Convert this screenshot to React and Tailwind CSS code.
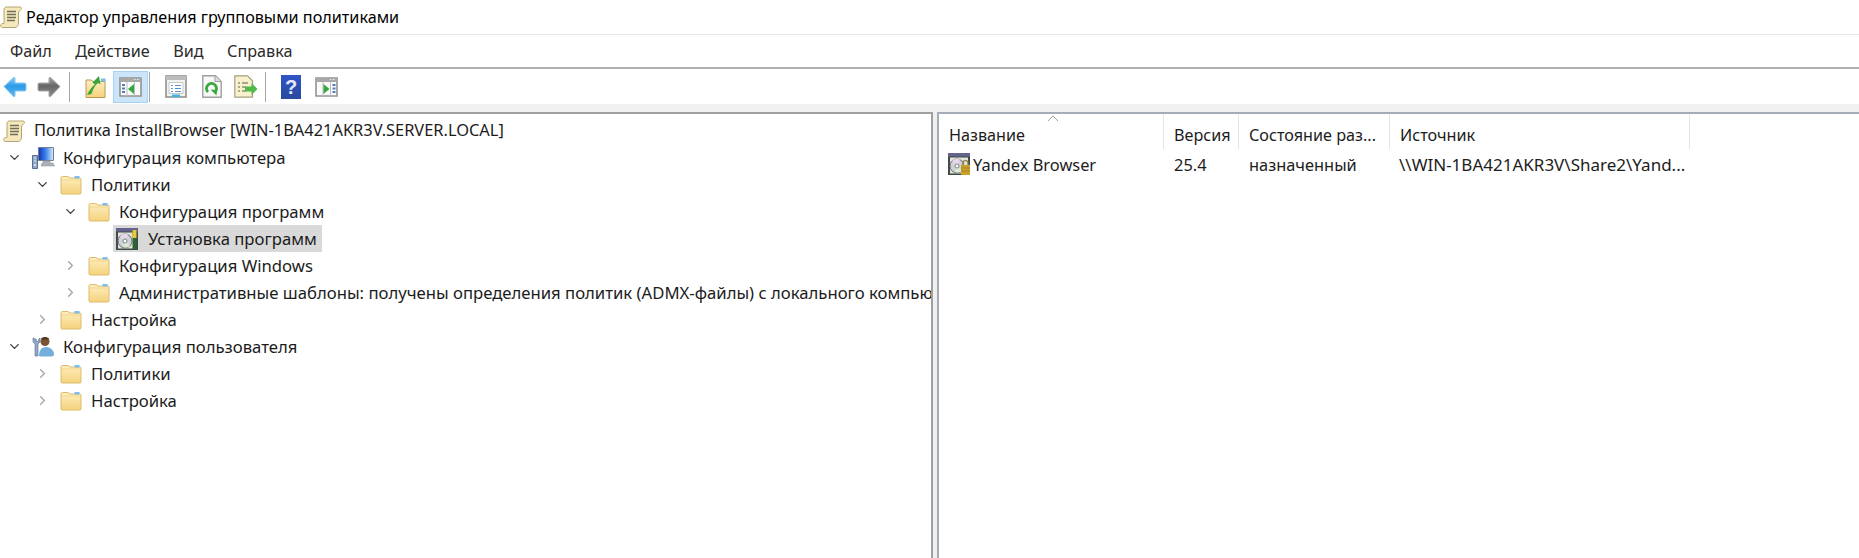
import { ChevronDown, ChevronRight } from "lucide-react";

const font = "[font-family:'Noto_Sans',sans-serif]";

function Defs() {
  return (
    <svg className="absolute w-0 h-0">
      <defs>
        <linearGradient id="folderFill" x1="0" y1="0" x2="0" y2="1">
          <stop offset="0" stopColor="#fdeec0" />
          <stop offset="1" stopColor="#f5d27c" />
        </linearGradient>
        <linearGradient id="backFill" x1="0" y1="0" x2="0" y2="1">
          <stop offset="0" stopColor="#8fd0f8" />
          <stop offset="0.45" stopColor="#2a9be8" />
          <stop offset="1" stopColor="#62b8f0" />
        </linearGradient>
        <linearGradient id="fwdFill" x1="0" y1="0" x2="0" y2="1">
          <stop offset="0" stopColor="#a8a8a8" />
          <stop offset="0.45" stopColor="#666666" />
          <stop offset="1" stopColor="#8f8f8f" />
        </linearGradient>
        <linearGradient id="helpFill" x1="0" y1="0" x2="0" y2="1">
          <stop offset="0" stopColor="#2f55c8" />
          <stop offset="1" stopColor="#2a4a9c" />
        </linearGradient>
        <linearGradient id="screenFill" x1="0" y1="0" x2="1" y2="0">
          <stop offset="0" stopColor="#1230b8" />
          <stop offset="0.5" stopColor="#3f86ee" />
          <stop offset="1" stopColor="#e0ecfb" />
        </linearGradient>
      </defs>
    </svg>
  );
}

function Scroll() {
  return (
    <svg viewBox="0 0 22 22" className="w-[22px] h-[22px] shrink-0">
      <path d="M6 1h14c1.500 0 2 1.500 1 2.500L18.500 6v11c0 2.500-1.500 4.500-3.500 4.500H2.500c-2.500 0-2.500-3.500 0-4H4V4c0-2 1-3 2-3z" fill="#f5e8bb" stroke="#b5a473" />
      <path d="M7 5.500h9M7 8.500h9M7 11.500h9M7 14.500h8" stroke="#6f6f5c" strokeWidth="1.300" />
    </svg>
  );
}

function Folder() {
  return (
    <svg viewBox="0 0 22 20" className="w-[22px] h-5 shrink-0">
      <path d="M1 3C1 2 1.500 1.500 2.500 1.500H8L10 3h10c.6 0 1 .4 1 1v14c0 .6-.4 1-1 1H2c-.6 0-1-.4-1-1z" fill="url(#folderFill)" stroke="#dcbc6c" />
      <path d="M2 5h18" stroke="#f3d68c" />
      <path d="M14.500 1h5v2.500h-5z" fill="#7cbdea" />
    </svg>
  );
}

function Computer() {
  return (
    <svg viewBox="0 0 24 24" className="w-6 h-6 shrink-0">
      <path d="M7.500 1.500h15v13h-15z" fill="url(#screenFill)" stroke="#74808e" />
      <path d="M12 15h7v2h3l1.500 3H10l1-3h1z" fill="#aab1bb" stroke="#8b929c" strokeWidth="0.500" />
      <path d="M1.500 9.500h5v13h-5z" fill="#8fa8c8" stroke="#5a7190" />
      <path d="M3 12h2M3 15h2" stroke="#eef4fa" strokeWidth="1.200" />
      <circle cx="4" cy="19" r="1" fill="#eef4fa" />
    </svg>
  );
}

function UserIcon() {
  return (
    <svg viewBox="0 0 24 24" className="w-6 h-6 shrink-0">
      <path d="M8 21c0-5 2-9 7-9s8 4 8 7.500c0 1.500-1.500 2-3.500 2H10c-1.500 0-2-.5-2-.5z" fill="#74aedc" />
      <circle cx="14" cy="6.500" r="4.500" fill="#7a5236" />
      <path d="M10 4c1-2.500 7-2.500 8 0-2 1-6 1-8 0z" fill="#54361f" />
      <path d="M2 3v4l2 2v12h3V9l2-2V3L7.500 4.500v2h-2v-2z" fill="#8fa8c8" stroke="#5a7190" strokeWidth="0.600" />
    </svg>
  );
}

function Disc({ lock }) {
  return (
    <svg viewBox="0 0 24 24" className="w-6 h-6 shrink-0">
      <path d="M1 1h22v22H1z" fill="#3d4a48" />
      <path d="M1 1h22v3.500H1z" fill="#64648f" />
      <path d="M3 5.500h18v16H3z" fill="#e4e4da" />
      <circle cx="10" cy="14" r="7" fill="#cfd3d8" stroke="#6f6f6f" />
      <path d="M10 14L5 9a7 7 0 0 1 8-1.500z" fill="#e8d6ee" />
      <path d="M10 14l5 5a7 7 0 0 1-7 1z" fill="#d8ecd6" />
      <circle cx="10" cy="14" r="2" fill="#fff" stroke="#808080" />
      {lock ? (
        <>
          <path d="M14 13h9v10h-9z" fill="#c9a02a" />
          <path d="M16 13v-2.500c0-2.500 5-2.500 5 0V13" fill="none" stroke="#8a7a40" strokeWidth="1.300" />
          <path d="M14 16h9M14 19h9" stroke="#a88520" />
        </>
      ) : (
        <>
          <path d="M17.500 3h4v19h-4z" fill="#2c6432" />
          <path d="M17.500 3h4v8h-4z" fill="#e8c83c" />
        </>
      )}
    </svg>
  );
}

function Window({ arrow }) {
  return (
    <svg viewBox="0 0 23 20" className="w-[23px] h-5 shrink-0">
      <path d="M1 1h21v18H1z" fill="#fbfbfb" stroke="#929292" strokeWidth="1.600" />
      <path d="M1 1h21v4H1z" fill="#a8a8a8" />
      <path d="M15 2.500h1.500M18 2.500h1.500" stroke="#eee" strokeWidth="1.200" />
      <path d="M8 5v14M15.500 5v14" stroke="#bdbdbd" />
      <path d={arrow === "left" ? "M3 8h3M3 11.500h3M3 15h3" : "M17.500 8h3M17.500 11.500h3M17.500 15h3"} stroke="#4f7fc0" strokeWidth="1.800" />
      {arrow === "left" ? (
        <path d="M15 7v10l-6-5z" fill="#33a840" />
      ) : (
        <path d="M8.500 7v10l6-5z" fill="#33a840" />
      )}
    </svg>
  );
}

function Toolbar() {
  return (
    <div className="flex items-center h-[35px] shrink-0">
      <svg viewBox="0 0 24 22" className="w-6 h-[22px] ml-[3px]">
        <path d="M1 10.500L10.500 1.500c.7-.6 1.500 0 1.500.8V7h9.500c.8 0 1.500.6 1.500 1.500v5c0 .8-.7 1.500-1.500 1.500H12v4.700c0 .8-.8 1.400-1.500.8z" fill="url(#backFill)" stroke="#86c6f0" />
      </svg>
      <svg viewBox="0 0 24 22" className="w-6 h-[22px] ml-[10px]">
        <path d="M23 10.500L13.500 1.500c-.7-.6-1.500 0-1.500.8V7H2.500C1.700 7 1 7.600 1 8.500v5c0 .8.7 1.500 1.500 1.500H12v4.700c0 .8.800 1.400 1.500.8z" fill="url(#fwdFill)" stroke="#a6a6a6" />
      </svg>
      <div className="w-[1px] h-[30px] bg-[#a6a6a6] ml-[8px]" />
      <svg viewBox="0 0 21 23" className="w-[21px] h-[23px] ml-[15px]">
        <path d="M1 5h5l2 1.500h12v16H1z" fill="url(#folderFill)" stroke="#b89a52" />
        <path d="M2 20c2.500-5 5-8.500 8-10.500L7.500 7.500 14 1l1.500 8.500-2.500-1.500c-3 2.500-5 6-6.500 11z" fill="#3aa63a" />
        <path d="M16 3.500h4.500v3H16z" fill="#7cbdea" />
      </svg>
      <div className="w-[35px] h-[32px] ml-[7px] flex items-center justify-center bg-[#cce4f7] border border-[#a8d2f3]">
        <Window arrow="left" />
      </div>
      <div className="w-[1px] h-[30px] bg-[#a6a6a6] ml-[1px]" />
      <svg viewBox="0 0 22 23" className="w-[22px] h-[23px] ml-[15px]">
        <path d="M1 1h20v21H1z" fill="#f2f2f2" stroke="#8a8a8a" strokeWidth="1.500" />
        <path d="M1 1h20v4H1z" fill="#bcbcbc" />
        <path d="M4 7.500h14v11H4z" fill="#fff" stroke="#c8c8c8" />
        <path d="M6 10.500h2M10 10.500h6M6 13.500h2M10 13.500h6M6 16.500h2M10 16.500h6" stroke="#5a8fd0" />
        <path d="M7 19.500h8v2.500H7z" fill="#3fb0e8" />
      </svg>
      <svg viewBox="0 0 20 23" className="w-5 h-[23px] ml-[15px]">
        <path d="M.8.800h12.700l5.700 5.700v15.700H.8z" fill="#f7f7f7" stroke="#a0a0a0" strokeWidth="1.400" />
        <path d="M13 1v5.500h6" fill="#dedede" stroke="#a0a0a0" />
        <path d="M6 17a5 5 0 1 1 7 0" fill="none" stroke="#36a83c" strokeWidth="2.800" />
        <path d="M8.500 14.500l6.500.5-.5 5.500z" fill="#36a83c" />
      </svg>
      <svg viewBox="0 0 24 23" className="w-6 h-[23px] ml-[12px]">
        <path d="M.8.800h12.700l5 5v16.400H.8z" fill="#f8f1ce" stroke="#a8a07e" strokeWidth="1.200" />
        <path d="M4 8h2M8 8h6M4 12h2M8 12h4M4 16h2M8 16h4" stroke="#5f5f4a" />
        <path d="M11 11.500h6.500V8l6 6-6 6v-3.500H11z" fill="#52b84a" />
      </svg>
      <div className="w-[1px] h-[30px] bg-[#a6a6a6] ml-[7px]" />
      <svg viewBox="0 0 20 24" className="w-5 h-6 ml-[15px]">
        <path d="M0 0h20v24H0z" fill="url(#helpFill)" />
        <text x="10" y="19" textAnchor="middle" fontSize="20" fontWeight="700" fill="#e8e8f4" fontFamily="Liberation Sans">?</text>
      </svg>
      <div className="ml-[14px]">
        <Window arrow="right" />
      </div>
    </div>
  );
}

const rows = [
  { level: 0, label: "Конфигурация компьютера", open: true, icon: <Computer /> },
  { level: 1, label: "Политики", open: true, icon: <Folder /> },
  { level: 2, label: "Конфигурация программ", open: true, icon: <Folder /> },
  { level: 3, label: "Установка программ", icon: <Disc />, selected: true },
  { level: 2, label: "Конфигурация Windows", icon: <Folder />, closed: true },
  { level: 2, label: "Административные шаблоны: получены определения политик (ADMX-файлы) с локального компьютера", icon: <Folder />, closed: true },
  { level: 1, label: "Настройка", icon: <Folder />, closed: true },
  { level: 0, label: "Конфигурация пользователя", open: true, icon: <UserIcon /> },
  { level: 1, label: "Политики", icon: <Folder />, closed: true },
  { level: 1, label: "Настройка", icon: <Folder />, closed: true },
];

const paddings = ["pl-[7px]", "pl-[35px]", "pl-[63px]", "pl-[91px]"];

function TreeRow({ row }) {
  return (
    <div className={`flex items-center h-[27px] ${paddings[row.level]}`}>
      <span className="w-[24px] shrink-0 flex items-center">
        {row.open && <ChevronDown className="w-[15px] h-[15px] text-[#404040]" strokeWidth={2.2} />}
        {row.closed && <ChevronRight className="w-[15px] h-[15px] text-[#a6a6a6]" strokeWidth={2.2} />}
      </span>
      <div className={`flex items-center h-[27px] pr-[5px] ${row.selected ? "-ml-[2px] pl-[2px] bg-[#d9d9d9]" : ""}`}>
        <span className="w-[24px] flex justify-center">{row.icon}</span>
        <span className={`text-[16.7px] text-[#1c1c1c] whitespace-nowrap ${row.selected ? "ml-[9px]" : "ml-[8px]"}`}>{row.label}</span>
      </div>
    </div>
  );
}

function HeaderCell({ width, children }) {
  return (
    <div className={`h-[35px] flex items-end pb-[2px] pl-[10px] border-r border-[#e5e5e5] text-[16.2px] text-[#1c1c1c] whitespace-nowrap overflow-hidden ${width}`}>
      {children}
    </div>
  );
}

export default function App() {
  return (
    <div className={`w-[1859px] h-[558px] overflow-hidden flex flex-col bg-white ${font}`}>
      <Defs />

      {/* Title */}
      <div className="h-[35px] flex items-center border-b border-[#e8e8e8] shrink-0">
        <Scroll />
        <span className="ml-[4px] text-[16.2px] text-black whitespace-nowrap">Редактор управления групповыми политиками</span>
      </div>

      {/* Menu */}
      <div className="h-[34px] flex items-center gap-[23.5px] pl-[10px] text-[16.2px] text-[#2a2a2a] border-b-2 border-[#b0b0b0] shrink-0">
        <span>Файл</span>
        <span>Действие</span>
        <span>Вид</span>
        <span>Справка</span>
      </div>

      <Toolbar />
      <div className="h-[8px] bg-[#f0f0f0] shrink-0" />

      {/* Panels */}
      <div className="flex flex-1 min-h-0 bg-[#f0f0f0]">
        <div className="w-[933px] shrink-0 bg-white border-t-2 border-r-2 border-[#a0a0a0] overflow-hidden pt-[3px]">
          <div className="flex items-center h-[27px] pl-[3px]">
            <Scroll />
            <span className="ml-[9px] text-[16.4px] text-[#1c1c1c] whitespace-nowrap">Политика InstallBrowser [WIN-1BA421AKR3V.SERVER.LOCAL]</span>
          </div>
          {rows.map((row, i) => (
            <TreeRow key={i} row={row} />
          ))}
        </div>
        <div className="ml-[4px] flex-1 bg-white border-t-2 border-l-2 border-[#a4acb8] overflow-hidden relative">
          <svg viewBox="0 0 10 5" className="absolute left-[109px] top-[2px] w-[10px] h-[5px]">
            <path d="M0 5l5-5 5 5" fill="none" stroke="#a0a0a0" />
          </svg>
          <div className="flex">
            <HeaderCell width="w-[225px]">Название</HeaderCell>
            <HeaderCell width="w-[75px]">Версия</HeaderCell>
            <HeaderCell width="w-[151px]">Состояние раз...</HeaderCell>
            <HeaderCell width="w-[300px]">Источник</HeaderCell>
          </div>
          <div className="flex items-center h-[27px] mt-[3px] text-[16.4px] text-[#1c1c1c] whitespace-nowrap">
            <div className="w-[225px] flex items-center pl-[8px]">
              <span className="-mt-[3px]">
                <Disc lock />
              </span>
              <span className="ml-[2px]">Yandex Browser</span>
            </div>
            <div className="w-[75px] pl-[10px]">25.4</div>
            <div className="w-[151px] pl-[10px]">назначенный</div>
            <div className="w-[300px] pl-[9px] text-[17px] -mt-[1px]">\\WIN-1BA421AKR3V\Share2\Yand...</div>
          </div>
        </div>
      </div>
    </div>
  );
}
